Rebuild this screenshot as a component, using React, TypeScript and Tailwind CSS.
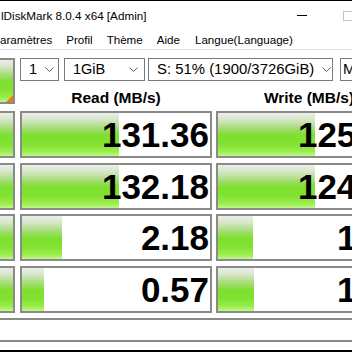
import React from "react";

const rows = [
  { label: ["SEQ1M", "Q8T1"], read: "131.36", rw: 97, write: "125.73", ww: 97 },
  { label: ["SEQ1M", "Q1T1"], read: "132.18", rw: 97, write: "124.37", ww: 97 },
  { label: ["RND4K", "Q32T16"], read: "2.18", rw: 40, write: "1.46", ww: 35 },
  { label: ["RND4K", "Q1T1"], read: "0.57", rw: 22, write: "1.03", ww: 36 },
];

const green =
  "bg-[linear-gradient(to_bottom,#eceeea_0%,#d6e6c8_16%,#a3dc74_36%,#7ddf2e_52%,#82e231_72%,#9cee4e_90%,#c2f78f_100%)]";

function Chevron() {
  return (
    <svg width="9" height="5" viewBox="0 0 9 5" className="shrink-0">
      <path d="M0.5 0.5 L4.5 4.5 L8.5 0.5" fill="none" stroke="#5a5a5a" strokeWidth="1" />
    </svg>
  );
}

function Combo({
  text,
  w,
  pl,
  pr,
  gap,
  size,
}: {
  text: string;
  w: string;
  pl: string;
  pr: string;
  gap: string;
  size: string;
}) {
  return (
    <div className={`${w} ${pl} ${pr} h-[23px] shrink-0 border border-[#7a7a7a] bg-white flex items-center`}>
      <span className={`${size} ${gap} flex-1 overflow-hidden whitespace-nowrap text-black`}>{text}</span>
      <Chevron />
    </div>
  );
}

function ResultBox({ value, width }: { value: string; width: number }) {
  return (
    <div className="relative w-[192px] h-full shrink-0 border-2 border-[#8a8a8a] bg-white overflow-hidden">
      <div className={`absolute left-0 top-0 bottom-0 ${green}`} style={{ width: `${width}px` }} />
      <div className="relative h-full flex items-center justify-end pr-[1px] text-[35px] font-bold leading-none text-black">
        {value}
      </div>
    </div>
  );
}

export default function App() {
  return (
    <div
      className="w-[352px] h-[352px] overflow-hidden bg-white flex flex-col"
      style={{ fontFamily: '"Liberation Sans", Arial, sans-serif' }}
    >
      <div className="h-px bg-black shrink-0" />
      {/* title bar */}
      <div className="h-[29px] shrink-0 flex items-center text-[11.7px] text-black">
        <span className="pl-[1px] whitespace-nowrap">lDiskMark 8.0.4 x64 [Admin]</span>
        <div className="ml-auto flex items-center">
          <div className="w-[10px] h-px bg-black mr-[36px]" />
          <div className="w-[10px] h-[10px] border border-[#c4c4c4] mr-[-1px]" />
        </div>
      </div>
      {/* menu bar */}
      <div className="h-[19px] shrink-0 flex items-center gap-[14px] text-[11.6px] text-black whitespace-nowrap">
        <span>aramètres</span>
        <span>Profil</span>
        <span>Thème</span>
        <span>Aide</span>
        <span className="ml-[1px]">Langue(Language)</span>
      </div>
      <div className="h-px bg-[#e2e2e2] shrink-0" />

      {/* controls */}
      <div className="pt-[8px] flex shrink-0">
        <div className={`relative w-[15px] h-[46px] shrink-0 border-y-2 border-r-2 border-[#8a8a8a] ${green}`}>
          <div className="absolute right-0 bottom-0 w-0 h-0 border-l-[7px] border-l-transparent border-b-[7px] border-b-[#f07c10]" />
        </div>
        <div className="ml-[5px] flex flex-col">
          <div className="flex">
            <Combo text="1" w="w-[39px]" pl="pl-[8px]" pr="pr-[4px]" gap="mr-[2px]" size="text-[14.5px]" />
            <div className="ml-[5px]">
              <Combo text="1GiB" w="w-[81px]" pl="pl-[8px]" pr="pr-[6px]" gap="mr-[2px]" size="text-[14.5px]" />
            </div>
            <div className="ml-[3px]">
              <Combo
                text="S: 51% (1900/3726GiB)"
                w="w-[185px]"
                pl="pl-[8px]"
                pr="pr-[1px]"
                gap="mr-[6px]"
                size="text-[14.9px]"
              />
            </div>
            <div className="ml-[7px]">
              <Combo text="MiB" w="w-[120px]" pl="pl-[2px]" pr="pr-[4px]" gap="mr-[2px]" size="text-[15px]" />
            </div>
          </div>
          <div className="h-[30px] pt-[3px] flex items-center text-[15.5px] font-bold text-black whitespace-nowrap">
            <div className="w-[192px] shrink-0 text-center">Read (MB/s)</div>
            <div className="w-[192px] shrink-0 ml-[1px] text-center">Write (MB/s)</div>
          </div>
        </div>
      </div>

      {/* results */}
      <div className="flex flex-col gap-[4.5px] shrink-0">
        {rows.map((r) => (
          <div key={r.read} className="flex h-[47px]">
            <div
              className={`w-[15px] h-full shrink-0 overflow-hidden flex justify-end border-y-2 border-r-2 border-[#8a8a8a] ${green}`}
            >
              <div className="w-[78px] shrink-0 flex flex-col items-center justify-center text-[14px] leading-[16px] text-black">
                <span>{r.label[0]}</span>
                <span>{r.label[1]}</span>
              </div>
            </div>
            <div className="ml-[5px]">
              <ResultBox value={r.read} width={r.rw} />
            </div>
            <div className="ml-[4px]">
              <ResultBox value={r.write} width={r.ww} />
            </div>
          </div>
        ))}
      </div>

      {/* comment */}
      <div className="mt-[5px] h-[24px] shrink-0 border-y-2 border-[#8a8a8a] bg-white" />
      <div className="flex-1" />
      <div className="h-[2px] bg-black shrink-0" />
    </div>
  );
}
